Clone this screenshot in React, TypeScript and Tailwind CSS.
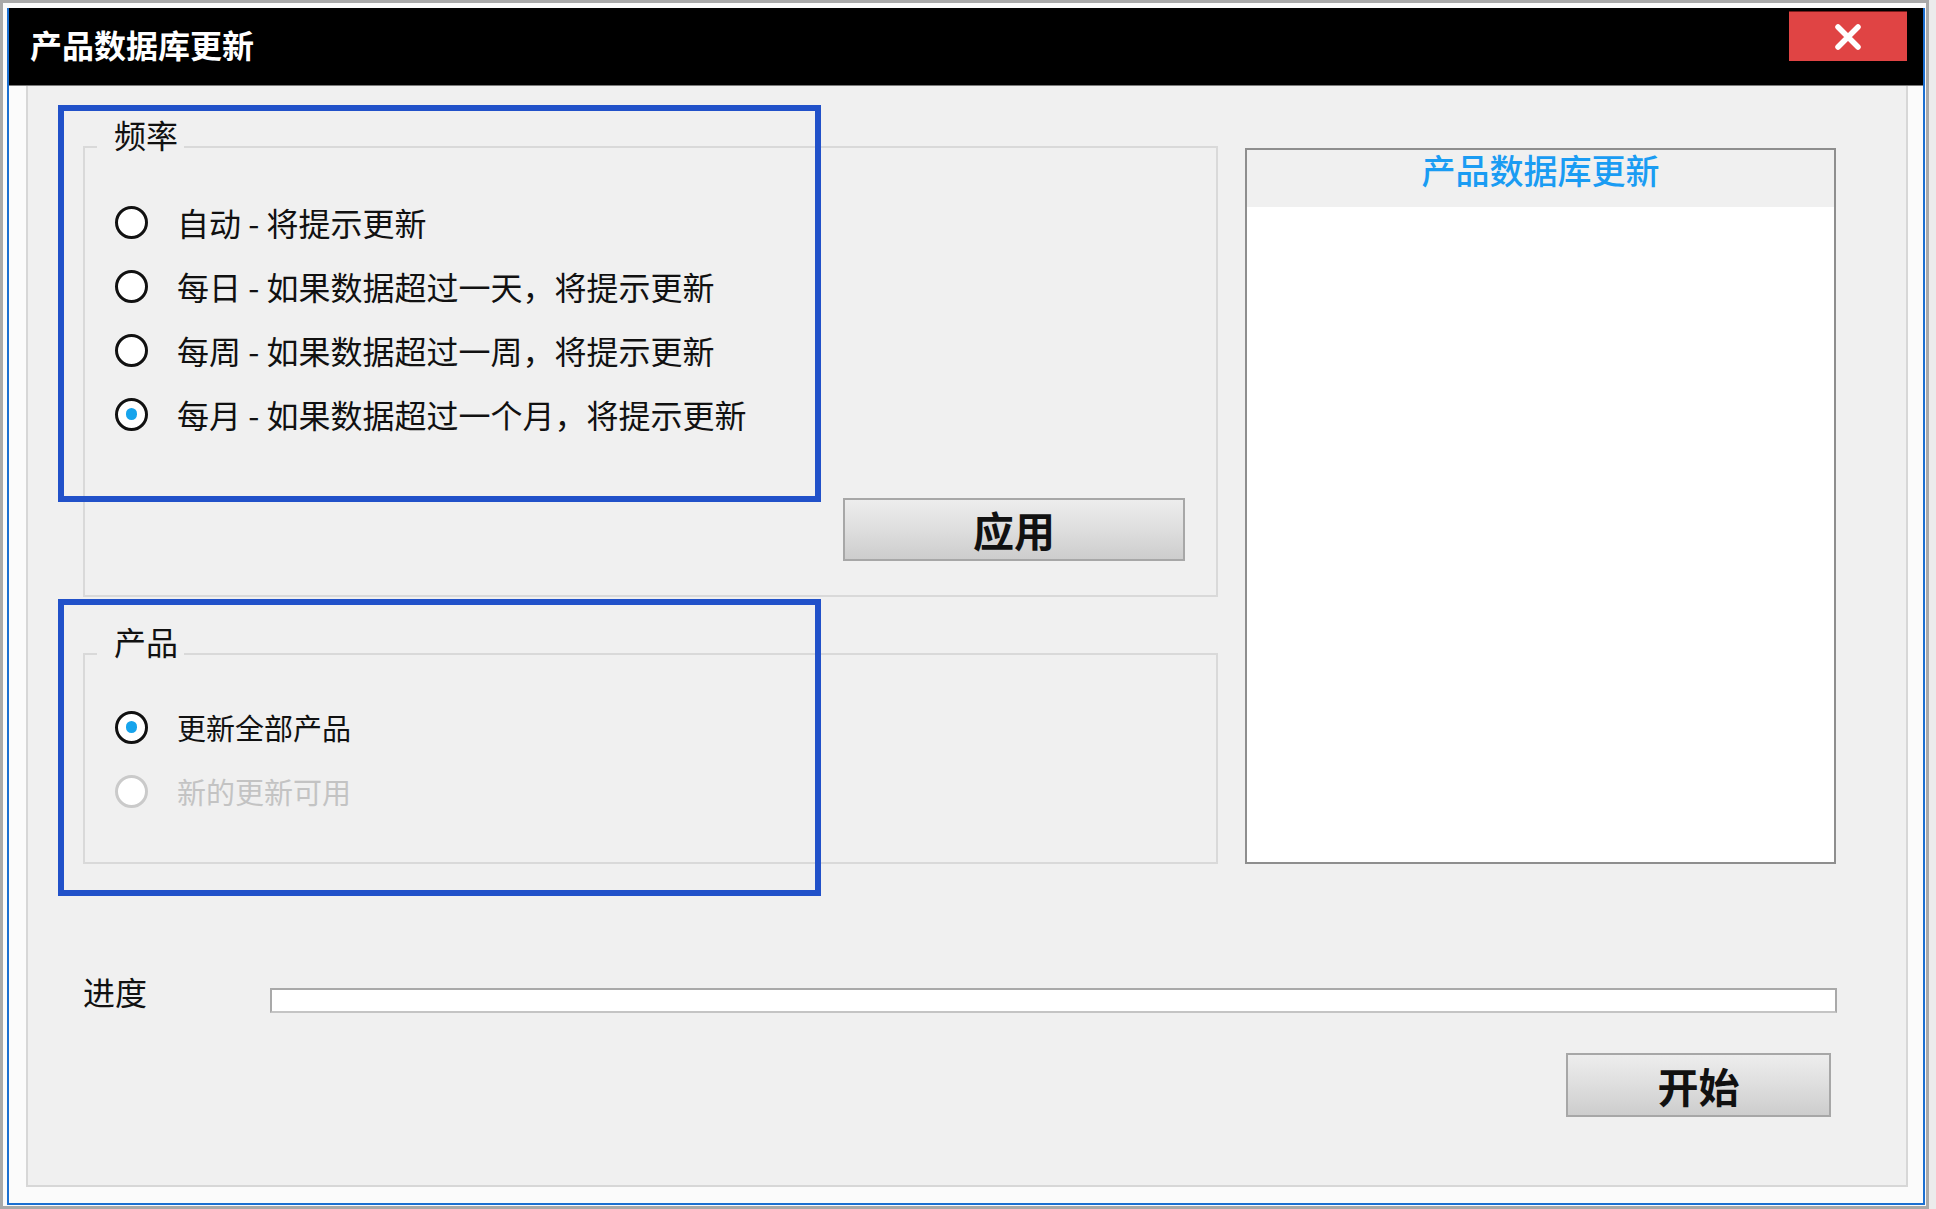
import React from 'react';
import clsx from 'clsx';

const FONT = "font-['Noto_Sans_CJK_SC','Liberation_Sans',sans-serif]";

type RadioProps = {
  label: string;
  checked?: boolean;
  disabled?: boolean;
  small?: boolean;
};

function Radio({ label, checked, disabled, small }: RadioProps) {
  return (
    <div className="flex h-[64px] items-center">
      <span
        className={clsx(
          'flex h-[33px] w-[33px] shrink-0 items-center justify-center rounded-full border-[3px] bg-white',
          disabled ? 'border-[#cacaca]' : 'border-[#111111]'
        )}
      >
        {checked && <span className="h-[12px] w-[11px] rounded-full bg-[#17a4ec]" />}
      </span>
      <span
        className={clsx(
          'ml-[29px] whitespace-nowrap leading-[38px]',
          small ? 'text-[29px]' : 'text-[32px]',
          disabled ? 'text-[#c3c3c3]' : 'text-[#111111]'
        )}
      >
        {label}
      </span>
    </div>
  );
}

function GroupBox({ title, children }: { title: string; children: React.ReactNode }) {
  return (
    <fieldset className="m-0 w-[1135px] border-2 border-[#d9d9d9] p-0">
      <legend className="ml-[12px] pb-[26px] pl-[17px] pr-[6px] text-[32px] leading-[38px] text-[#111111]">
        {title}
      </legend>
      {children}
    </fieldset>
  );
}

function GreyButton({ label, className }: { label: string; className?: string }) {
  return (
    <button
      type="button"
      className={clsx(
        'flex items-center justify-center border-2 border-[#a7a7a7] bg-linear-to-b from-[#ededed] via-[#dedede] to-[#cdcdcd] text-[41px] font-bold leading-none text-[#111111]',
        className
      )}
    >
      {label}
    </button>
  );
}

export default function App() {
  return (
    <div className={clsx('h-[1209px] w-[1936px] overflow-hidden bg-[#ececec]', FONT)}>
      <div className="h-[1209px] w-[1929px] border-[3px] border-[#a9a9a9] bg-[#fbfbfb] pb-[1px] pl-[4px] pr-[1px] pt-[5px]">
        <div className="flex h-full flex-col border-x-2 border-b-2 border-[#1b6fd1]">
          {/* title bar */}
          <div className="flex h-[78px] shrink-0 items-start justify-between border-b border-[#7a7a7a] bg-black">
            <div className="flex h-[71px] items-center pl-[21px] text-[32px] font-bold leading-[40px] text-white">
              产品数据库更新
            </div>
            <button
              type="button"
              className="mr-[16px] mt-[3px] flex h-[50px] w-[118px] items-center justify-center border-t border-[#7a1a1a] bg-[#e04444]"
            >
              <svg width="28" height="28" viewBox="0 0 28 28">
                <path d="M4 4 L24 24 M24 4 L4 24" stroke="white" strokeWidth="5.5" strokeLinecap="round" />
              </svg>
            </button>
          </div>

          {/* body */}
          <div className="flex flex-1 flex-col pb-[16px] pl-[17px] pr-[15px]">
            <div className="relative flex flex-1 flex-col border-x-2 border-b-2 border-[#d7d7d7] bg-[#f0f0f0]">
              <div className="flex items-start gap-[27px] pl-[55px] pt-[29px]">
                <div className="flex flex-col gap-[25px]">
                  <GroupBox title="频率">
                    <div className="pl-[30px] pt-[11px]">
                      <Radio label="自动 - 将提示更新" />
                      <Radio label="每日 - 如果数据超过一天，将提示更新" />
                      <Radio label="每周 - 如果数据超过一周，将提示更新" />
                      <Radio label="每月 - 如果数据超过一个月，将提示更新" checked />
                    </div>
                    <div className="flex justify-end pb-[34px] pr-[31px] pt-[52px]">
                      <GreyButton label="应用" className="h-[63px] w-[342px]" />
                    </div>
                  </GroupBox>

                  <GroupBox title="产品">
                    <div className="pb-[39px] pl-[30px] pt-[9px]">
                      <Radio label="更新全部产品" checked small />
                      <Radio label="新的更新可用" disabled small />
                    </div>
                  </GroupBox>
                </div>

                <div className="mt-[33px] flex h-[716px] w-[591px] flex-col border-2 border-[#8e8e8e] bg-white">
                  <div className="flex h-[57px] justify-center bg-[#f0f0f0] text-[34px] font-medium leading-[40px] text-[#1a9cf3]">
                    产品数据库更新
                  </div>
                </div>
              </div>

              {/* progress */}
              <div className="mt-[108px] flex items-start pl-[55px] pr-[69px]">
                <span className="w-[64px] whitespace-nowrap text-[32px] leading-[38px] text-[#111111]">进度</span>
                <div className="ml-[123px] mt-[16px] h-[25px] flex-1 border-2 border-[#a9a9a9] border-b-[#c4c4c4] bg-white" />
              </div>

              <div className="mt-[40px] flex justify-end pr-[75px]">
                <GreyButton label="开始" className="h-[64px] w-[265px]" />
              </div>

              {/* annotation frames */}
              <div className="absolute left-[30px] top-[19px] h-[397px] w-[763px] border-[6px] border-[#2151c9]" />
              <div className="absolute left-[30px] top-[513px] h-[297px] w-[763px] border-[6px] border-[#2151c9]" />
            </div>
          </div>
        </div>
      </div>
    </div>
  );
}
